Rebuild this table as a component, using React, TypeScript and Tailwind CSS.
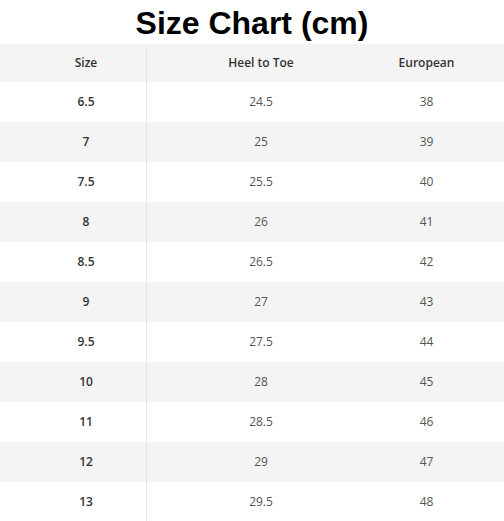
const ROWS: [string, string, string][] = [
  ["6.5", "24.5", "38"],
  ["7", "25", "39"],
  ["7.5", "25.5", "40"],
  ["8", "26", "41"],
  ["8.5", "26.5", "42"],
  ["9", "27", "43"],
  ["9.5", "27.5", "44"],
  ["10", "28", "45"],
  ["11", "28.5", "46"],
  ["12", "29", "47"],
  ["13", "29.5", "48"],
];

export default function App() {
  return (
    <div className="w-[504px] h-[521px] overflow-hidden bg-white">
      <h1 className="h-[44px] flex items-center justify-center font-['Liberation_Sans',Arial,sans-serif] text-[32px] font-bold text-black leading-none pt-[2px]">
        Size Chart (cm)
      </h1>
      <div className="font-['Open_Sans','Noto_Sans',sans-serif] text-[12px]">
        {/* Header */}
        <div className="grid grid-cols-[146px_1px_228px_129px] h-[38px] items-center bg-[#f4f4f4] font-semibold text-[#333]">
          <div className="pl-[26px] text-center">Size</div>
          <div className="h-full bg-[#e6e6e6]" />
          <div className="px-[26px] text-center">Heel to Toe</div>
          <div className="pr-[26px] text-center">European</div>
        </div>
        {ROWS.map((r, i) => (
          <div
            key={r[0]}
            className={`grid grid-cols-[146px_1px_228px_129px] h-[40px] items-center ${i % 2 === 1 ? "bg-[#f4f4f4]" : "bg-white"}`}
          >
            <div className="pl-[26px] text-center font-semibold text-[#333]">{r[0]}</div>
            <div className="h-full bg-[#e6e6e6]" />
            <div className="px-[26px] text-center text-[#555]">{r[1]}</div>
            <div className="pr-[26px] text-center text-[#555]">{r[2]}</div>
          </div>
        ))}
      </div>
    </div>
  );
}
